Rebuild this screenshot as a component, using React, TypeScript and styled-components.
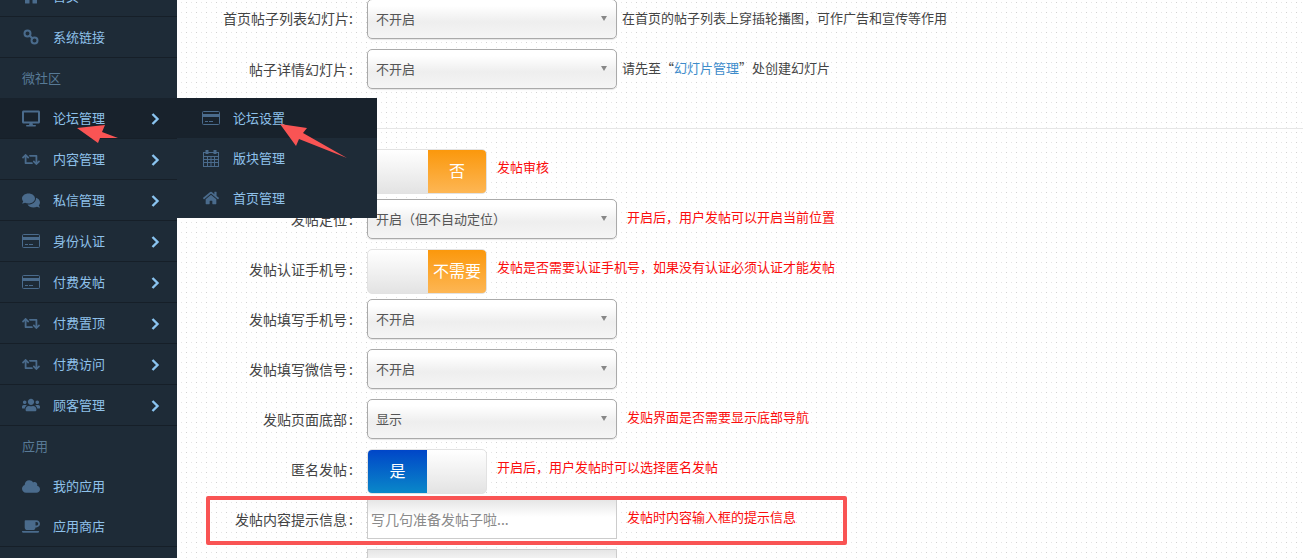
import React from "react";
import styled, { createGlobalStyle } from "styled-components";
import { FaDesktop, FaRetweet, FaComments, FaUsers, FaCloud, FaCoffee, FaHome } from "react-icons/fa";

const Global = createGlobalStyle`
  html, body { margin: 0; padding: 0; height: 100%; overflow: hidden; background: #fff; }
  body { font-family: "Noto Sans CJK SC", "Liberation Sans", sans-serif; }
  * { box-sizing: border-box; }
`;

const Page = styled.div`
  position: relative;
  display: flex;
  width: 1303px;
  height: 558px;
  overflow: hidden;
`;

const Sidebar = styled.nav`
  flex: 0 0 177px;
  height: 558px;
  overflow: hidden;
  background: #1e2b37;
`;

const NavList = styled.div`
  margin-top: -24px;
`;

const NavRow = styled.div<{ $active?: boolean; $plain?: boolean }>`
  display: flex;
  align-items: center;
  height: ${(p) => (p.$plain ? "40px" : "41px")};
  padding-left: 22px;
  font-size: 13px;
  color: #8ec1ea;
  background: ${(p) => (p.$active ? "#18222c" : "transparent")};
  border-bottom: ${(p) => (p.$plain ? "none" : "1px solid #161f28")};
`;

const NavIcon = styled.span`
  display: flex;
  align-items: center;
  justify-content: center;
  flex: 0 0 18px;
  width: 18px;
  height: 18px;
  color: #4a6b8c;
  font-size: 19px;
`;

const NavText = styled.span`
  flex: 1;
  margin-left: 13px;
  line-height: 40px;
`;

const Chevron = styled.svg`
  width: 9px;
  height: 12px;
  margin-right: 17px;
  margin-top: 2px;
  fill: none;
  stroke: #8ac4f0;
  stroke-width: 2.4;
`;

const SectionTitle = styled.div`
  height: 40px;
  line-height: 39px;
  padding-left: 22px;
  font-size: 13px;
  color: #587a96;
`;

const Flyout = styled.div`
  position: absolute;
  left: 177px;
  top: 98px;
  width: 200px;
  height: 120px;
  background: #1e2b37;
  z-index: 2;
`;

const FlyoutItem = styled.div<{ $active?: boolean }>`
  display: flex;
  align-items: center;
  height: 40px;
  padding-left: 25px;
  font-size: 13px;
  color: #8ec1ea;
  background: ${(p) => (p.$active ? "#18222c" : "transparent")};
`;

const Main = styled.main`
  flex: 1;
  height: 558px;
  overflow: hidden;
  background-color: #fff;
  background-image:
    radial-gradient(circle at 9.5px 2.5px, #d2d2d2 0.6px, transparent 0.75px),
    radial-gradient(circle at 4.5px 2.5px, #e6e6e6 0.6px, transparent 0.75px),
    radial-gradient(circle at 9.5px 7.5px, #e6e6e6 0.6px, transparent 0.75px);
  background-size: 10px 10px;
`;

const Form = styled.div`
  margin-top: -1px;
`;

const FormRow = styled.div`
  display: flex;
  align-items: flex-start;
  height: 50px;
`;

const FieldLabel = styled.label<{ $tight?: boolean }>`
  flex: 0 0 176px;
  width: 176px;
  margin-right: 14px;
  padding-right: ${(p) => (p.$tight ? "0" : "2px")};
  text-align: right;
  font-size: 14px;
  line-height: ${(p) => (p.$tight ? "38px" : "40px")};
  color: #444;
  white-space: nowrap;
  & > i { font-style: normal; margin-left: ${(p) => (p.$tight ? "0" : "2px")}; margin-right: ${(p) => (p.$tight ? "0" : "-2px")}; }
`;

const SelectBox = styled.div`
  position: relative;
  flex: 0 0 250px;
  width: 250px;
  height: 40px;
  padding-left: 8px;
  line-height: 37px;
  font-size: 13px;
  color: #555;
  border: 1px solid #aaa;
  border-radius: 5px;
  background: linear-gradient(#fff 0%, #fff 15%, #eee 58%, #f5f5f5 100%);
  box-shadow: 0 1px 1px rgba(0, 0, 0, 0.1);
`;

const Caret = styled.span`
  position: absolute;
  right: 9px;
  top: 16px;
  width: 0;
  height: 0;
  border-left: 3.5px solid transparent;
  border-right: 3.5px solid transparent;
  border-top: 5px solid #888;
`;

const Toggle = styled.div`
  display: flex;
  flex: 0 0 120px;
  width: 120px;
  height: 45px;
  border: 1px solid #e2e2e2;
  border-radius: 5px;
  overflow: hidden;
  background: linear-gradient(#fff, #e3e3e3);
`;

const ToggleBlank = styled.span`
  flex: 1;
`;

const ToggleValue = styled.span<{ $on?: boolean }>`
  flex: 0 0 ${(p) => (p.$on ? "59px" : "58px")};
  text-align: center;
  line-height: 41px;
  font-size: 16px;
  color: #fff;
  white-space: nowrap;
  background: ${(p) =>
    p.$on ? "linear-gradient(#0046c8, #0a88c9)" : "linear-gradient(#fb980c, #fdb654)"};
`;

const Help = styled.span<{ $alert?: boolean; $gap: number }>`
  margin-left: ${(p) => p.$gap}px;
  font-size: 13px;
  line-height: ${(p) => (p.$alert ? "36px" : "38px")};
  white-space: nowrap;
  color: ${(p) => (p.$alert ? "#fb0d0d" : "#444")};
`;

const HelpLink = styled.a`
  color: #3d8ccb;
`;

const Divider = styled.hr`
  height: 1px;
  margin: 29px 0 20px;
  border: none;
  background: #e6e6e6;
`;

const TextInput = styled.input`
  flex: 0 0 250px;
  width: 250px;
  height: 40px;
  padding: 0 3px;
  font: 14px "Noto Sans CJK SC", sans-serif;
  color: #555;
  border: 1px solid #ccc;
  border-radius: 0;
  outline: none;
  background: linear-gradient(#e6e6e6, #fff 45%);
  &::placeholder { color: #8a8a8a; opacity: 1; }
`;

const Callout = styled.div`
  position: absolute;
  left: 206px;
  top: 496px;
  width: 641px;
  height: 49px;
  border: 4px solid #f95454;
  border-radius: 2px;
  pointer-events: none;
  z-index: 3;
`;

const ArrowMark = styled.svg<{ $x: number; $y: number }>`
  position: absolute;
  left: ${(p) => p.$x}px;
  top: ${(p) => p.$y}px;
  fill: #f95454;
  z-index: 4;
`;

const Card = () => (
  <svg width="18" height="14" viewBox="0 0 18 14">
    <rect x="0.5" y="0.5" width="17" height="13" rx="1" fill="none" stroke="currentColor" />
    <rect x="1" y="3" width="16" height="3" fill="currentColor" />
    <rect x="3" y="10" width="3" height="1" fill="currentColor" />
    <rect x="7" y="10" width="4" height="1" fill="currentColor" />
  </svg>
);

const Chain = () => (
  <svg width="16" height="16" viewBox="0 0 16 16" fill="none" stroke="currentColor" strokeWidth="2">
    <circle cx="4.5" cy="4.5" r="3" />
    <circle cx="11.5" cy="11.5" r="3" />
    <path d="M6 6l4 4" />
  </svg>
);

const Calendar = () => (
  <svg width="16" height="17" viewBox="0 0 16 17" fill="none" stroke="currentColor">
    <rect x="0.5" y="2.5" width="15" height="14" />
    <path d="M0 6.5h16M0 9.5h16M0 12.5h16M4.5 6v10M8 6v10M11.5 6v10" />
    <rect x="2.5" y="0" width="3" height="4" fill="currentColor" stroke="none" />
    <rect x="10.5" y="0" width="3" height="4" fill="currentColor" stroke="none" />
  </svg>
);

const Arrowhead = () => (
  <Chevron viewBox="0 0 9 12">
    <path d="M1.5 1l5 5-5 5" />
  </Chevron>
);

const sub = [
  { icon: <FaDesktop />, text: "论坛管理", active: true },
  { icon: <FaRetweet />, text: "内容管理" },
  { icon: <FaComments />, text: "私信管理" },
  { icon: <Card />, text: "身份认证" },
  { icon: <Card />, text: "付费发帖" },
  { icon: <FaRetweet />, text: "付费置顶" },
  { icon: <FaRetweet />, text: "付费访问" },
  { icon: <FaUsers size={22} />, text: "顾客管理" },
];

const Select = ({ value }: { value: string }) => (
  <SelectBox>
    {value}
    <Caret />
  </SelectBox>
);

const Switch = ({ on, text }: { on?: boolean; text: string }) => (
  <Toggle>
    {on && <ToggleValue $on>{text}</ToggleValue>}
    <ToggleBlank />
    {!on && <ToggleValue>{text}</ToggleValue>}
  </Toggle>
);

export default function App() {
  return (
    <>
      <Global />
      <Page>
        <Sidebar>
          <NavList>
            <NavRow>
              <NavIcon><FaHome /></NavIcon>
              <NavText>首页</NavText>
            </NavRow>
            <NavRow>
              <NavIcon><Chain /></NavIcon>
              <NavText>系统链接</NavText>
            </NavRow>
            <SectionTitle>微社区</SectionTitle>
            {sub.map((s) => (
              <NavRow key={s.text} $active={s.active}>
                <NavIcon>{s.icon}</NavIcon>
                <NavText>{s.text}</NavText>
                <Arrowhead />
              </NavRow>
            ))}
            <SectionTitle>应用</SectionTitle>
            <NavRow $plain>
              <NavIcon><FaCloud /></NavIcon>
              <NavText>我的应用</NavText>
            </NavRow>
            <NavRow>
              <NavIcon><FaCoffee /></NavIcon>
              <NavText>应用商店</NavText>
            </NavRow>
          </NavList>
        </Sidebar>

        <Main>
          <Form>
            <FormRow>
              <FieldLabel $tight>首页帖子列表幻灯片:</FieldLabel>
              <Select value="不开启" />
              <Help $gap={5}>在首页的帖子列表上穿插轮播图，可作广告和宣传等作用</Help>
            </FormRow>
            <FormRow>
              <FieldLabel>帖子详情幻灯片<i>:</i></FieldLabel>
              <Select value="不开启" />
              <Help $gap={5}>
                请先至“<HelpLink>幻灯片管理</HelpLink>”处创建幻灯片
              </Help>
            </FormRow>
            <Divider />
            <FormRow>
              <FieldLabel>发帖审核<i>:</i></FieldLabel>
              <Switch text="否" />
              <Help $alert $gap={10}>发帖审核</Help>
            </FormRow>
            <FormRow>
              <FieldLabel>发帖定位<i>:</i></FieldLabel>
              <Select value="开启（但不自动定位）" />
              <Help $alert $gap={10}>开启后，用户发帖可以开启当前位置</Help>
            </FormRow>
            <FormRow>
              <FieldLabel>发帖认证手机号<i>:</i></FieldLabel>
              <Switch text="不需要" />
              <Help $alert $gap={10}>发帖是否需要认证手机号，如果没有认证必须认证才能发帖</Help>
            </FormRow>
            <FormRow>
              <FieldLabel>发帖填写手机号<i>:</i></FieldLabel>
              <Select value="不开启" />
            </FormRow>
            <FormRow>
              <FieldLabel>发帖填写微信号<i>:</i></FieldLabel>
              <Select value="不开启" />
            </FormRow>
            <FormRow>
              <FieldLabel>发贴页面底部<i>:</i></FieldLabel>
              <Select value="显示" />
              <Help $alert $gap={10}>发贴界面是否需要显示底部导航</Help>
            </FormRow>
            <FormRow>
              <FieldLabel>匿名发帖<i>:</i></FieldLabel>
              <Switch on text="是" />
              <Help $alert $gap={10}>开启后，用户发帖时可以选择匿名发帖</Help>
            </FormRow>
            <FormRow>
              <FieldLabel>发帖内容提示信息<i>:</i></FieldLabel>
              <TextInput placeholder="写几句准备发帖子啦..." readOnly />
              <Help $alert $gap={10}>发帖时内容输入框的提示信息</Help>
            </FormRow>
            <FormRow>
              <FieldLabel />
              <TextInput readOnly />
            </FormRow>
          </Form>
        </Main>

        <Flyout>
          <FlyoutItem $active>
            <NavIcon><Card /></NavIcon>
            <NavText>论坛设置</NavText>
          </FlyoutItem>
          <FlyoutItem>
            <NavIcon><Calendar /></NavIcon>
            <NavText>版块管理</NavText>
          </FlyoutItem>
          <FlyoutItem>
            <NavIcon><FaHome size={16} /></NavIcon>
            <NavText>首页管理</NavText>
          </FlyoutItem>
        </Flyout>

        <ArrowMark $x={77} $y={123} width="42" height="21" viewBox="0 0 42 21">
          <polygon points="0,5 28,2 25,9 41,15 23,15 21,20" />
        </ArrowMark>
        <ArrowMark $x={279} $y={124} width="69" height="35" viewBox="0 0 69 35">
          <polygon points="1,0 28,4 24,9 68,34 20,15 17,22" />
        </ArrowMark>
        <Callout />
      </Page>
    </>
  );
}
